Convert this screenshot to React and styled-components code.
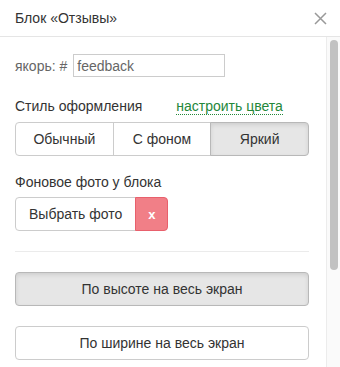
import React from 'react'
import styled, { createGlobalStyle } from 'styled-components'

const Global = createGlobalStyle`
  html, body {
    margin: 0;
    padding: 0;
    background: #fff;
  }
  body {
    font-family: 'Liberation Sans', Arial, sans-serif;
    font-size: 14px;
    color: #333;
  }
`

const Panel = styled.div`
  width: 340px;
  height: 367px;
  display: flex;
  flex-direction: column;
  overflow: hidden;
  background: #fff;
  border-radius: 4px 4px 0 0;
`

const Header = styled.div`
  height: 37px;
  flex: none;
  display: flex;
  align-items: center;
  justify-content: space-between;
  padding: 0 12px 0 15px;
  border-bottom: 1px solid #e5e5e5;
  box-sizing: border-box;
`

const Title = styled.div`
  font-size: 14px;
  color: #333;
`

const Close = styled.button`
  border: 0;
  background: none;
  padding: 0;
  width: 16px;
  height: 16px;
  display: flex;
  align-items: center;
  justify-content: center;
  cursor: pointer;
`

const Body = styled.div`
  flex: 1;
  display: flex;
  min-height: 0;
`

const Content = styled.div`
  flex: 1;
  padding: 17px 17px 0 15px;
  display: flex;
  flex-direction: column;
`

const Track = styled.div`
  width: 14px;
  flex: none;
  background: #fafafa;
  border-left: 1px solid #ececec;
  box-sizing: border-box;
  padding: 3px 2px 0 3px;
`

const Thumb = styled.div`
  height: 230px;
  border-radius: 4px;
  background: #c2c2c2;
`

const AnchorRow = styled.div`
  display: flex;
  align-items: center;
  gap: 6px;
  color: #666;
  font-size: 14px;
`

const Input = styled.input`
  width: 152px;
  height: 23px;
  box-sizing: border-box;
  border: 1px solid #ccc;
  padding: 0 3px;
  font: inherit;
  color: #666;
  outline: none;
`

const Label = styled.div`
  display: flex;
  align-items: baseline;
  margin-top: ${p => p.$top}px;
  margin-bottom: 7px;
  font-size: 14px;
  color: #333;
`

const ColorLink = styled.a`
  margin-left: 34px;
  color: #24873a;
  text-decoration: none;
  border-bottom: 1px dotted #24873a;
  line-height: 15px;
`

const Group = styled.div`
  display: flex;
`

const Btn = styled.button`
  flex: ${p => (p.$grow ? 1 : 'none')};
  height: 34px;
  padding: 0 ${p => (p.$grow ? 0 : 13)}px;
  box-sizing: border-box;
  font: inherit;
  font-size: 14px;
  color: #333;
  background: ${p => (p.$active ? '#e6e6e6' : '#fff')};
  border: 1px solid ${p => (p.$active ? '#b8b8b8' : '#ccc')};
  box-shadow: ${p => (p.$active ? 'inset 0 2px 4px rgba(0,0,0,0.1)' : 'none')};
  border-radius: 4px;
  cursor: pointer;

  ${Group} > & {
    border-radius: 0;
    margin-left: -1px;
  }
  ${Group} > &:first-child {
    border-radius: 4px 0 0 4px;
    margin-left: 0;
  }
  ${Group} > &:last-child {
    border-radius: 0 4px 4px 0;
  }
`

const Remove = styled.button`
  width: 33px;
  height: 34px;
  margin-left: -1px;
  box-sizing: border-box;
  border: 1px solid #e8606c;
  border-radius: 0 4px 4px 0;
  background: #f17f87;
  color: #fff;
  font: inherit;
  font-weight: bold;
  font-size: 13px;
  cursor: pointer;
`

const Divider = styled.hr`
  border: 0;
  border-top: 1px solid #ebebeb;
  margin: 20px 0 20px;
`

const Wide = styled(Btn)`
  width: 100%;
  margin-bottom: ${p => p.$gap || 0}px;
`

export default function App() {
  return (
    <>
      <Global />
      <Panel>
        <Header>
          <Title>Блок «Отзывы»</Title>
          <Close aria-label="Закрыть">
            <svg width="15" height="15" viewBox="0 0 15 15">
              <path d="M2 2L13 13M13 2L2 13" stroke="#999" strokeWidth="1.5" />
            </svg>
          </Close>
        </Header>
        <Body>
          <Content>
            <AnchorRow>
              якорь: #
              <Input defaultValue="feedback" />
            </AnchorRow>
            <Label $top={21}>
              Стиль оформления
              <ColorLink href="#">настроить цвета</ColorLink>
            </Label>
            <Group>
              <Btn $grow>Обычный</Btn>
              <Btn $grow>С фоном</Btn>
              <Btn $grow $active>Яркий</Btn>
            </Group>
            <Label $top={18}>Фоновое фото у блока</Label>
            <Group>
              <Btn>Выбрать фото</Btn>
              <Remove>x</Remove>
            </Group>
            <Divider />
            <Wide $active $gap={20}>По высоте на весь экран</Wide>
            <Wide>По ширине на весь экран</Wide>
          </Content>
          <Track>
            <Thumb />
          </Track>
        </Body>
      </Panel>
    </>
  )
}
